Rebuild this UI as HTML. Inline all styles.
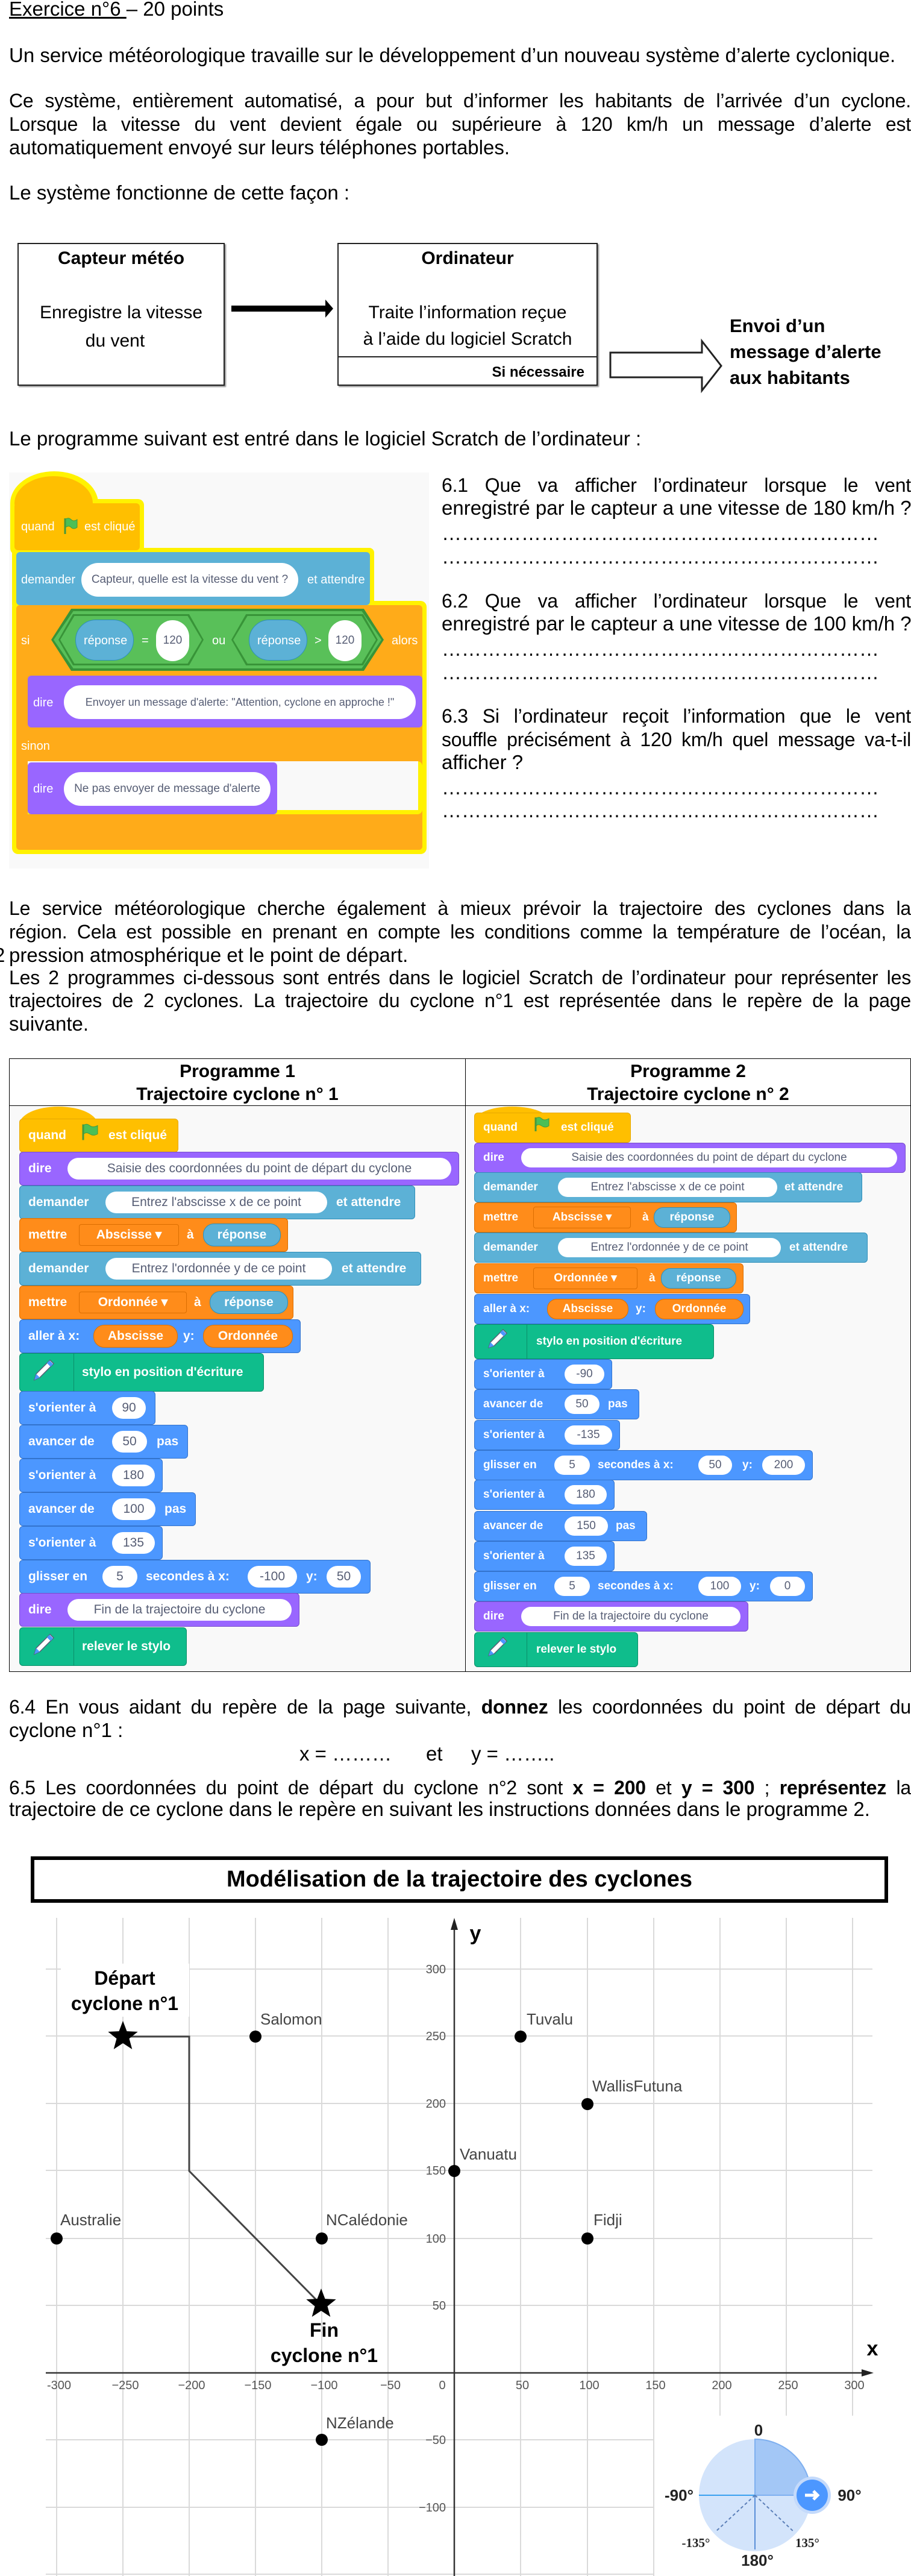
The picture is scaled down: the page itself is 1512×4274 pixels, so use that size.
<!DOCTYPE html>
<html><head><meta charset="utf-8">
<style>
body{margin:0;width:1512px;height:4274px;position:relative;overflow:hidden;background:#fff;font-family:"Liberation Sans",Arial,sans-serif;color:#000}
.a{position:absolute}
.l{position:absolute;left:15px;width:1497px;font-size:33px;line-height:38px;height:38px;white-space:nowrap}
.j{position:absolute;left:15px;width:1497px;font-size:32px;letter-spacing:-0.2px;line-height:38px;height:38px;text-align:justify;text-align-last:justify;white-space:normal;overflow:hidden}
.q{left:733px;width:779px}
.box{position:absolute;border:2.5px solid #222;box-shadow:2px 2px 2px #888;background:#fff}
.ct{position:absolute;left:0;right:0;text-align:center;font-size:30px;line-height:40px}
.b{position:absolute;color:#fff;font-weight:bold;font-size:21px;border-radius:6px;box-sizing:border-box;white-space:nowrap}
.b>span{position:absolute;top:50%;transform:translateY(-50%);line-height:34px}
.b>.in{background:#fff;color:#575e75;font-weight:normal;text-align:center;height:36px;line-height:36px;border-radius:18px}
.b2{font-size:19px}
.b2>.in{height:32px;line-height:32px;border-radius:16px}
.ev{background:#ffbf00;border:1px solid #e6a800}
.lo{background:#9966ff;border:1px solid #774dcb}
.se{background:#5cb1d6;border:1px solid #2e8eb8}
.va{background:#ff8c1a;border:1px solid #db6e00}
.mo{background:#4c97ff;border:1px solid #3373cc}
.pe{background:#0fbd8c;border:1px solid #0b8e69}
.dd{border:1px solid #db6e00;border-radius:4px;text-align:center;color:#fff}
.ovs{background:#5cb1d6;border:1px solid #2e8eb8;border-radius:18px;height:36px;text-align:center;color:#fff}
.ovv{background:#ff8c1a;border:1px solid #db6e00;border-radius:18px;height:36px;text-align:center;color:#fff}
.b2>.ovs,.b2>.ovv{height:32px;border-radius:16px}
.sep{width:1px;height:100%;top:0!important;transform:none!important;background:#0b8e69}
.s1{position:absolute;color:#fff;font-size:20px;white-space:nowrap;transform:translateY(-50%);line-height:30px}
.i1{position:absolute;background:#fff;color:#575e75;font-size:19px;border-radius:28px;text-align:center;white-space:nowrap;box-sizing:border-box}
</style></head><body>

<div class="l" style="top:-4px"><span style="text-decoration:underline">Exercice n°6 </span>– 20 points</div>
<div class="l" style="top:73px">Un service météorologique travaille sur le développement d’un nouveau système d’alerte cyclonique.</div>
<div class="j" style="top:148px">Ce système, entièrement automatisé, a pour but d’informer les habitants de l’arrivée d’un cyclone.</div>
<div class="j" style="top:187px">Lorsque la vitesse du vent devient égale ou supérieure à 120 km/h un message d’alerte est</div>
<div class="l" style="top:226px">automatiquement envoyé sur leurs téléphones portables.</div>
<div class="l" style="top:301px">Le système fonctionne de cette façon :</div>

<div class="box" style="left:29px;top:403px;width:340px;height:233px">
  <div class="ct" style="top:4px;font-weight:bold">Capteur météo</div>
  <div class="ct" style="top:94px">Enregistre la vitesse</div>
  <div class="ct" style="top:141px;left:-20px">du vent</div>
</div>
<div class="box" style="left:560px;top:403px;width:428px;height:233px">
  <div class="ct" style="top:4px;font-weight:bold">Ordinateur</div>
  <div class="ct" style="top:94px">Traite l’information reçue</div>
  <div class="ct" style="top:138px">à l’aide du logiciel Scratch</div>
  <div class="a" style="left:0;right:0;top:186px;border-top:2.5px solid #222"></div>
  <div class="a" style="right:20px;top:196px;font-size:24px;font-weight:bold;line-height:34px">Si nécessaire</div>
</div>
<svg class="a" style="left:0;top:480px" width="1512" height="180">
  <polygon points="384,27 540,27 540,17 553,32 540,47 540,37 384,37" fill="#000"/>
  <polygon points="1013,105 1165,105 1165,86 1197,127 1165,168 1165,146 1013,146" fill="#fff" stroke="#222" stroke-width="3"/>
</svg>
<div class="a" style="left:1211px;top:519px;font-size:31px;font-weight:bold;line-height:43px">Envoi d’un<br>message d’alerte<br>aux habitants</div>

<div class="l" style="top:709px">Le programme suivant est entré dans le logiciel Scratch de l’ordinateur :</div>

<div class="a" style="left:15px;top:784px;width:697px;height:657px;background:#f9f9f9"></div>
<div class="a" style="left:17px;top:782px;width:146px;height:106px;border-radius:50%;background:#fff200"></div>
<div class="a" style="left:17px;top:828px;width:222px;height:92px;border-radius:10px;background:#fff200"></div>
<div class="a" style="left:20px;top:909px;width:601px;height:102px;border-radius:8px;background:#fff200"></div>
<div class="a" style="left:20px;top:997px;width:688px;height:420px;border-radius:10px;background:#fff200"></div>
<div class="a" style="left:24px;top:790px;width:130px;height:90px;border-radius:50%;background:#ffbf00"></div>
<div class="a" style="left:24px;top:835px;width:208px;height:78px;border-radius:6px;background:#ffbf00"></div>
<span class="s1" style="left:35px;top:874px">quand</span>
<svg class="a" style="left:104px;top:858px" width="26" height="30"><path d="M4 2V28" stroke="#45993d" stroke-width="3"/><path d="M5 3Q10 0 14 4T24 4V17Q18 21 14 17T5 17Z" fill="#4cbf56" stroke="#45993d"/></svg>
<span class="s1" style="left:140px;top:874px">est cliqué</span>

<div class="a" style="left:27px;top:916px;width:587px;height:88px;border-radius:6px;background:#5cb1d6"></div>
<span class="s1" style="left:35px;top:962px">demander</span>
<div class="i1" style="left:135px;top:934px;width:360px;height:56px;line-height:56px">Capteur, quelle est la vitesse du vent ?</div>
<span class="s1" style="left:510px;top:962px">et attendre</span>

<div class="a" style="left:27px;top:1004px;width:674px;height:406px;border-radius:6px;background:#ffab19"></div>
<div class="a" style="left:46px;top:1263px;width:655px;height:88px;background:#fff200;border-radius:0 8px 8px 0"></div>
<div class="a" style="left:46px;top:1263px;width:648px;height:81px;background:#f9f9f9"></div>
<div class="a" style="left:27px;top:1207px;width:674px;height:56px;background:#ffab19;border-radius:0 6px 6px 0"></div>
<div class="a" style="left:27px;top:1351px;width:674px;height:59px;background:#ffab19;border-radius:0 6px 6px 6px"></div>
<div class="a" style="left:27px;top:1200px;width:19px;height:160px;background:#ffab19"></div>
<span class="s1" style="left:35px;top:1063px">si</span>
<div class="a" style="left:85px;top:1010px;width:552px;height:103px;background:#389438;clip-path:polygon(0 50%,6% 0,94% 0,100% 50%,94% 100%,6% 100%)"></div>
<div class="a" style="left:89px;top:1014px;width:544px;height:95px;background:#59c059;clip-path:polygon(0 50%,6% 0,94% 0,100% 50%,94% 100%,6% 100%)"></div>
<div class="a" style="left:97px;top:1019px;width:241px;height:85px;background:#389438;clip-path:polygon(0 50%,10% 0,90% 0,100% 50%,90% 100%,10% 100%)"></div>
<div class="a" style="left:100px;top:1022px;width:235px;height:79px;background:#59c059;clip-path:polygon(0 50%,10% 0,90% 0,100% 50%,90% 100%,10% 100%)"></div>
<div class="a" style="left:384px;top:1019px;width:243px;height:85px;background:#389438;clip-path:polygon(0 50%,10% 0,90% 0,100% 50%,90% 100%,10% 100%)"></div>
<div class="a" style="left:387px;top:1022px;width:237px;height:79px;background:#59c059;clip-path:polygon(0 50%,10% 0,90% 0,100% 50%,90% 100%,10% 100%)"></div>
<div class="a" style="left:125px;top:1028px;width:97px;height:68px;border-radius:34px;background:#5cb1d6;border:1px solid #2e8eb8;box-sizing:border-box"></div>
<span class="s1" style="left:139px;top:1063px">réponse</span>
<span class="s1" style="left:235px;top:1063px">=</span>
<div class="i1" style="left:259px;top:1029px;width:55px;height:68px;line-height:68px">120</div>
<span class="s1" style="left:352px;top:1063px">ou</span>
<div class="a" style="left:413px;top:1028px;width:97px;height:68px;border-radius:34px;background:#5cb1d6;border:1px solid #2e8eb8;box-sizing:border-box"></div>
<span class="s1" style="left:427px;top:1063px">réponse</span>
<span class="s1" style="left:522px;top:1063px">&gt;</span>
<div class="i1" style="left:545px;top:1029px;width:55px;height:68px;line-height:68px">120</div>
<span class="s1" style="left:650px;top:1063px">alors</span>

<div class="a" style="left:46px;top:1121px;width:655px;height:86px;border-radius:6px;background:#9966ff"></div>
<span class="s1" style="left:55px;top:1166px">dire</span>
<div class="i1" style="left:106px;top:1137px;width:584px;height:56px;line-height:56px;font-size:18px">Envoyer un message d'alerte: "Attention, cyclone en approche !"</div>
<span class="s1" style="left:35px;top:1238px">sinon</span>
<div class="a" style="left:46px;top:1265px;width:414px;height:86px;border-radius:6px;background:#9966ff"></div>
<span class="s1" style="left:55px;top:1309px">dire</span>
<div class="i1" style="left:106px;top:1281px;width:343px;height:56px;line-height:56px">Ne pas envoyer de message d'alerte</div>

<div class="j q" style="top:786px">6.1 Que va afficher l’ordinateur lorsque le vent</div>
<div class="l q" style="top:824px">enregistré par le capteur a une vitesse de 180 km/h ?</div>
<div class="l q" style="top:866px">…………………………………………………………</div>
<div class="l q" style="top:905px">…………………………………………………………</div>
<div class="j q" style="top:978px">6.2 Que va afficher l’ordinateur lorsque le vent</div>
<div class="l q" style="top:1016px">enregistré par le capteur a une vitesse de 100 km/h ?</div>
<div class="l q" style="top:1058px">…………………………………………………………</div>
<div class="l q" style="top:1097px">…………………………………………………………</div>
<div class="j q" style="top:1169px">6.3 Si l’ordinateur reçoit l’information que le vent</div>
<div class="j q" style="top:1208px">souffle précisément à 120 km/h quel message va-t-il</div>
<div class="l q" style="top:1246px">afficher ?</div>
<div class="l q" style="top:1288px">…………………………………………………………</div>
<div class="l q" style="top:1326px">…………………………………………………………</div>

<div class="j" style="top:1488px">Le service météorologique cherche également à mieux prévoir la trajectoire des cyclones dans la</div>
<div class="j" style="top:1527px">région. Cela est possible en prenant en compte les conditions comme la température de l’océan, la</div>
<div class="l" style="top:1566px"><span style="position:absolute;left:-25px">2</span>pression atmosphérique et le point de départ.</div>
<div class="j" style="top:1603px">Les 2 programmes ci-dessous sont entrés dans le logiciel Scratch de l’ordinateur pour représenter les</div>
<div class="j" style="top:1641px">trajectoires de 2 cyclones. La trajectoire du cyclone n°1 est représentée dans le repère de la page</div>
<div class="l" style="top:1680px">suivante.</div>

<div class="a" style="left:15px;top:1756px;width:1495px;height:1016px;border:1.5px solid #000"></div>
<div class="a" style="left:16px;top:1834px;width:1495px;border-top:1.5px solid #000"></div>
<div class="a" style="left:772px;top:1756px;height:1017px;border-left:1.5px solid #000"></div>
<div class="a" style="left:17px;top:1836px;width:754px;height:936px;background:#f9f9f9"></div>
<div class="a" style="left:774px;top:1836px;width:736px;height:936px;background:#f9f9f9"></div>
<div class="a" style="left:16px;width:756px;top:1759px;text-align:center;font-weight:bold;font-size:30px;line-height:38px">Programme 1<br>Trajectoire cyclone n° 1</div>
<div class="a" style="left:773px;width:738px;top:1759px;text-align:center;font-weight:bold;font-size:30px;line-height:38px">Programme 2<br>Trajectoire cyclone n° 2</div>

<div class="a" style="left:32px;top:1836px;width:130px;height:60px;border-radius:50%;background:#ffbf00"></div>
<div class="b ev" style="left:32px;top:1856px;width:264px;height:56px"><span style="left:14px">quand</span><span style="left:101px"><svg width="30" height="30"><path d="M4 2V28" stroke="#45993d" stroke-width="3"/><path d="M5 3Q10 0 15 4T28 4V18Q21 22 15 18T5 18Z" fill="#4cbf56" stroke="#45993d"/></svg></span><span style="left:147px">est cliqué</span></div>
<div class="b lo" style="left:32px;top:1911px;width:730px;height:56px"><span style="left:14px">dire</span><span class="in" style="left:79px;width:637px">Saisie des coordonnées du point de départ du cyclone</span></div>
<div class="b se" style="left:32px;top:1967px;width:657px;height:56px"><span style="left:14px">demander</span><span class="in" style="left:142px;width:368px">Entrez l'abscisse x de ce point</span><span style="left:525px">et attendre</span></div>
<div class="b va" style="left:32px;top:2021px;width:446px;height:56px"><span style="left:14px">mettre</span><span class="dd" style="left:98px;width:164px">Abscisse ▾</span><span style="left:277px">à</span><span class="ovs" style="left:304px;width:127px;line-height:36px">réponse</span></div>
<div class="b se" style="left:32px;top:2077px;width:667px;height:56px"><span style="left:14px">demander</span><span class="in" style="left:142px;width:376px">Entrez l'ordonnée y de ce point</span><span style="left:534px">et attendre</span></div>
<div class="b va" style="left:32px;top:2133px;width:455px;height:56px"><span style="left:14px">mettre</span><span class="dd" style="left:98px;width:177px">Ordonnée ▾</span><span style="left:289px">à</span><span class="ovs" style="left:315px;width:128px;line-height:36px">réponse</span></div>
<div class="b mo" style="left:32px;top:2189px;width:467px;height:56px"><span style="left:14px">aller à x:</span><span class="ovv" style="left:122px;width:138px;line-height:36px">Abscisse</span><span style="left:271px">y:</span><span class="ovv" style="left:304px;width:147px;line-height:36px">Ordonnée</span></div>
<div class="b pe" style="left:32px;top:2245px;width:406px;height:64px"><span style="left:18px"><svg width="44" height="44"><path d="M6 40L9 30L32 7L38 13L15 36Z" fill="#fff" stroke="#575e75" stroke-width="1.5"/><path d="M29 10L35 16" stroke="#4c97ff" stroke-width="6"/><path d="M6 40L9 30L15 36Z" fill="#4c97ff"/></svg></span><span class="sep" style="left:89px"></span><span style="left:103px">stylo en position d'écriture</span></div>
<div class="b mo" style="left:32px;top:2308px;width:226px;height:56px"><span style="left:14px">s'orienter à</span><span class="in" style="left:153px;width:56px">90</span></div>
<div class="b mo" style="left:32px;top:2364px;width:280px;height:56px"><span style="left:14px">avancer de</span><span class="in" style="left:153px;width:58px">50</span><span style="left:227px">pas</span></div>
<div class="b mo" style="left:32px;top:2420px;width:238px;height:56px"><span style="left:14px">s'orienter à</span><span class="in" style="left:153px;width:71px">180</span></div>
<div class="b mo" style="left:32px;top:2476px;width:293px;height:56px"><span style="left:14px">avancer de</span><span class="in" style="left:153px;width:72px">100</span><span style="left:240px">pas</span></div>
<div class="b mo" style="left:32px;top:2532px;width:238px;height:56px"><span style="left:14px">s'orienter à</span><span class="in" style="left:153px;width:71px">135</span></div>
<div class="b mo" style="left:32px;top:2588px;width:583px;height:56px"><span style="left:14px">glisser en</span><span class="in" style="left:137px;width:58px">5</span><span style="left:209px">secondes à x:</span><span class="in" style="left:378px;width:82px">-100</span><span style="left:475px">y:</span><span class="in" style="left:509px;width:57px">50</span></div>
<div class="b lo" style="left:32px;top:2643px;width:465px;height:56px"><span style="left:14px">dire</span><span class="in" style="left:79px;width:372px">Fin de la trajectoire du cyclone</span></div>
<div class="b pe" style="left:32px;top:2700px;width:278px;height:64px"><span style="left:18px"><svg width="44" height="44"><path d="M6 40L9 30L32 7L38 13L15 36Z" fill="#fff" stroke="#575e75" stroke-width="1.5"/><path d="M29 10L35 16" stroke="#4c97ff" stroke-width="6"/><path d="M6 40L9 30L15 36Z" fill="#4c97ff"/></svg></span><span class="sep" style="left:89px"></span><span style="left:103px">relever le stylo</span></div>

<div class="a" style="left:787px;top:1836px;width:126px;height:50px;border-radius:50%;background:#ffbf00"></div>
<div class="b b2 ev" style="left:787px;top:1846px;width:260px;height:50px"><span style="left:14px">quand</span><span style="left:97px"><svg width="28" height="26"><path d="M4 2V25" stroke="#45993d" stroke-width="3"/><path d="M5 3Q10 0 14 4T26 4V16Q20 20 14 16T5 16Z" fill="#4cbf56" stroke="#45993d"/></svg></span><span style="left:143px">est cliqué</span></div>
<div class="b b2 lo" style="left:787px;top:1896px;width:716px;height:50px"><span style="left:14px">dire</span><span class="in" style="left:77px;width:624px">Saisie des coordonnées du point de départ du cyclone</span></div>
<div class="b b2 se" style="left:787px;top:1945px;width:644px;height:50px"><span style="left:14px">demander</span><span class="in" style="left:138px;width:364px">Entrez l'abscisse x de ce point</span><span style="left:514px">et attendre</span></div>
<div class="b b2 va" style="left:787px;top:1995px;width:436px;height:50px"><span style="left:14px">mettre</span><span class="dd" style="left:97px;width:160px">Abscisse ▾</span><span style="left:278px">à</span><span class="ovs" style="left:297px;width:125px;line-height:32px">réponse</span></div>
<div class="b b2 se" style="left:787px;top:2045px;width:653px;height:50px"><span style="left:14px">demander</span><span class="in" style="left:138px;width:370px">Entrez l'ordonnée y de ce point</span><span style="left:522px">et attendre</span></div>
<div class="b b2 va" style="left:787px;top:2096px;width:447px;height:50px"><span style="left:14px">mettre</span><span class="dd" style="left:97px;width:171px">Ordonnée ▾</span><span style="left:289px">à</span><span class="ovs" style="left:309px;width:123px;line-height:32px">réponse</span></div>
<div class="b b2 mo" style="left:787px;top:2147px;width:458px;height:50px"><span style="left:14px">aller à x:</span><span class="ovv" style="left:120px;width:133px;line-height:32px">Abscisse</span><span style="left:267px">y:</span><span class="ovv" style="left:299px;width:145px;line-height:32px">Ordonnée</span></div>
<div class="b b2 pe" style="left:787px;top:2197px;width:398px;height:58px"><span style="left:18px"><svg width="40" height="40"><path d="M5 36L8 27L29 6L35 12L14 33Z" fill="#fff" stroke="#575e75" stroke-width="1.5"/><path d="M26 9L32 15" stroke="#4c97ff" stroke-width="6"/><path d="M5 36L8 27L14 33Z" fill="#4c97ff"/></svg></span><span class="sep" style="left:86px"></span><span style="left:102px">stylo en position d'écriture</span></div>
<div class="b b2 mo" style="left:787px;top:2255px;width:229px;height:50px"><span style="left:14px">s'orienter à</span><span class="in" style="left:149px;width:66px">-90</span></div>
<div class="b b2 mo" style="left:787px;top:2305px;width:274px;height:50px"><span style="left:14px">avancer de</span><span class="in" style="left:149px;width:58px">50</span><span style="left:221px">pas</span></div>
<div class="b b2 mo" style="left:787px;top:2356px;width:242px;height:50px"><span style="left:14px">s'orienter à</span><span class="in" style="left:149px;width:79px">-135</span></div>
<div class="b b2 mo" style="left:787px;top:2406px;width:562px;height:50px"><span style="left:14px">glisser en</span><span class="in" style="left:132px;width:59px">5</span><span style="left:204px">secondes à x:</span><span class="in" style="left:371px;width:56px">50</span><span style="left:444px">y:</span><span class="in" style="left:477px;width:71px">200</span></div>
<div class="b b2 mo" style="left:787px;top:2455px;width:233px;height:50px"><span style="left:14px">s'orienter à</span><span class="in" style="left:149px;width:70px">180</span></div>
<div class="b b2 mo" style="left:787px;top:2507px;width:287px;height:50px"><span style="left:14px">avancer de</span><span class="in" style="left:149px;width:72px">150</span><span style="left:234px">pas</span></div>
<div class="b b2 mo" style="left:787px;top:2557px;width:233px;height:50px"><span style="left:14px">s'orienter à</span><span class="in" style="left:149px;width:70px">135</span></div>
<div class="b b2 mo" style="left:787px;top:2607px;width:562px;height:50px"><span style="left:14px">glisser en</span><span class="in" style="left:132px;width:59px">5</span><span style="left:204px">secondes à x:</span><span class="in" style="left:371px;width:71px">100</span><span style="left:456px">y:</span><span class="in" style="left:490px;width:58px">0</span></div>
<div class="b b2 lo" style="left:787px;top:2657px;width:455px;height:50px"><span style="left:14px">dire</span><span class="in" style="left:77px;width:364px">Fin de la trajectoire du cyclone</span></div>
<div class="b b2 pe" style="left:787px;top:2708px;width:272px;height:58px"><span style="left:18px"><svg width="40" height="40"><path d="M5 36L8 27L29 6L35 12L14 33Z" fill="#fff" stroke="#575e75" stroke-width="1.5"/><path d="M26 9L32 15" stroke="#4c97ff" stroke-width="6"/><path d="M5 36L8 27L14 33Z" fill="#4c97ff"/></svg></span><span class="sep" style="left:86px"></span><span style="left:102px">relever le stylo</span></div>

<div class="j" style="top:2813px">6.4 En vous aidant du repère de la page suivante, <b>donnez</b> les coordonnées du point de départ du</div>
<div class="l" style="top:2852px">cyclone n°1 :</div>
<div class="l" style="top:2891px;left:497px;width:400px">x = ………<span style="position:absolute;left:210px">et</span><span style="position:absolute;left:285px">y = ……..</span></div>
<div class="j" style="top:2947px">6.5 Les coordonnées du point de départ du cyclone n°2 sont <b>x = 200</b> et <b>y = 300</b> ; <b>représentez</b> la</div>
<div class="l" style="top:2983px">trajectoire de ce cyclone dans le repère en suivant les instructions données dans le programme 2.</div>

<div class="a" style="left:51px;top:3080px;width:1411px;height:65px;border:6px solid #000;text-align:center;font-weight:bold;font-size:38px;line-height:65px">Modélisation de la trajectoire des cyclones</div>

<svg class="a" style="left:0;top:3160px" width="1512" height="1114">
<g transform="translate(0,-3160)" font-family="Liberation Sans, Arial, sans-serif">
<g stroke="#dadada" stroke-width="2">
<line x1="94" y1="3182" x2="94" y2="4274"/><line x1="204" y1="3182" x2="204" y2="4274"/><line x1="314" y1="3182" x2="314" y2="4274"/><line x1="424" y1="3182" x2="424" y2="4274"/><line x1="534" y1="3182" x2="534" y2="4274"/><line x1="644" y1="3182" x2="644" y2="4274"/><line x1="864" y1="3182" x2="864" y2="4274"/><line x1="975" y1="3182" x2="975" y2="4274"/><line x1="1085" y1="3182" x2="1085" y2="4274"/><line x1="1195" y1="3182" x2="1195" y2="4274"/><line x1="1305" y1="3182" x2="1305" y2="4274"/><line x1="1415" y1="3182" x2="1415" y2="4274"/>
<line x1="76" y1="3267" x2="1448" y2="3267"/><line x1="76" y1="3378" x2="1448" y2="3378"/><line x1="76" y1="3490" x2="1448" y2="3490"/><line x1="76" y1="3601" x2="1448" y2="3601"/><line x1="76" y1="3714" x2="1448" y2="3714"/><line x1="76" y1="3825" x2="1448" y2="3825"/><line x1="76" y1="4048" x2="1448" y2="4048"/><line x1="76" y1="4160" x2="1448" y2="4160"/><line x1="76" y1="4271" x2="1448" y2="4271"/>
</g>
<line x1="76" y1="3937" x2="1440" y2="3937" stroke="#333" stroke-width="2.5"/>
<polygon points="1450,3937 1430,3931 1430,3943" fill="#222"/>
<line x1="754" y1="3192" x2="754" y2="4274" stroke="#333" stroke-width="2.5"/>
<polygon points="754,3182 748,3202 760,3202" fill="#222"/>
<text x="789" y="3219" font-size="34" font-weight="bold" text-anchor="middle">y</text>
<text x="1448" y="3908" font-size="34" font-weight="bold" text-anchor="middle">x</text>
<g font-size="20" fill="#555" text-anchor="middle">
<text x="98" y="3964">-300</text><text x="208" y="3964">−250</text><text x="318" y="3964">−200</text><text x="428" y="3964">−150</text><text x="538" y="3964">−100</text><text x="648" y="3964">−50</text><text x="734" y="3964">0</text><text x="867" y="3964">50</text><text x="978" y="3964">100</text><text x="1088" y="3964">150</text><text x="1198" y="3964">200</text><text x="1308" y="3964">250</text><text x="1418" y="3964">300</text>
</g>
<g font-size="20" fill="#555" text-anchor="end">
<text x="740" y="3274">300</text><text x="740" y="3385">250</text><text x="740" y="3497">200</text><text x="740" y="3608">150</text><text x="740" y="3721">100</text><text x="740" y="3832">50</text><text x="740" y="4055">−50</text><text x="740" y="4167">−100</text>
</g>
<polyline points="204,3379 314,3379 314,3602 534,3825" fill="none" stroke="#444" stroke-width="3"/>
<g fill="#000">
<circle cx="424" cy="3379" r="10"/><circle cx="864" cy="3379" r="10"/><circle cx="975" cy="3491" r="10"/><circle cx="754" cy="3602" r="10"/><circle cx="94" cy="3714" r="10"/><circle cx="534" cy="3714" r="10"/><circle cx="975" cy="3714" r="10"/><circle cx="534" cy="4048" r="10"/>
<path transform="translate(204,3379)" d="M0,-26 6.5,-8.9 24.7,-8 10.5,3.4 15.3,21 0,11 -15.3,21 -10.5,3.4 -24.7,-8 -6.5,-8.9Z"/>
<path transform="translate(533,3823)" d="M0,-26 6.5,-8.9 24.7,-8 10.5,3.4 15.3,21 0,11 -15.3,21 -10.5,3.4 -24.7,-8 -6.5,-8.9Z"/>
</g>
<g font-size="26" fill="#444">
<text x="432" y="3359">Salomon</text><text x="874" y="3359">Tuvalu</text><text x="983" y="3470">WallisFutuna</text><text x="763" y="3583">Vanuatu</text><text x="100" y="3692">Australie</text><text x="541" y="3692">NCalédonie</text><text x="985" y="3692">Fidji</text><text x="541" y="4029">NZélande</text>
</g>
<rect x="101" y="3258" width="213" height="88" fill="#fff"/>
<g font-size="32" font-weight="bold" text-anchor="middle">
<text x="207" y="3293">Départ</text><text x="207" y="3335">cyclone n°1</text>
<text x="538" y="3877">Fin</text><text x="538" y="3919">cyclone n°1</text>
</g>
<rect x="1086" y="4008" width="370" height="270" fill="#fff"/>
<circle cx="1253" cy="4140" r="93" fill="#d3e4fb"/>
<path d="M1253 4140 L1253 4047 A93 93 0 0 1 1346 4140 Z" fill="#a3c7f6" stroke="#7fb0f0" stroke-width="2"/>
<line x1="1160" y1="4140" x2="1253" y2="4140" stroke="#3aa0f0" stroke-width="2"/>
<line x1="1253" y1="4140" x2="1253" y2="4230" stroke="#5b8fd8" stroke-width="2"/>
<line x1="1253" y1="4140" x2="1187" y2="4201" stroke="#5b7fb8" stroke-width="2" stroke-dasharray="5,4"/>
<line x1="1253" y1="4140" x2="1318" y2="4201" stroke="#5b7fb8" stroke-width="2" stroke-dasharray="5,4"/>
<circle cx="1348" cy="4140" r="31" fill="#c4dafb"/>
<circle cx="1348" cy="4140" r="26" fill="#4c97ff"/>
<path d="M1336 4140 H1357 M1350 4133 L1357 4140 L1350 4147" stroke="#fff" stroke-width="5" fill="none"/>
<g font-weight="bold" text-anchor="middle" fill="#222">
<text x="1259" y="4041" font-size="26">0</text>
<text x="1127" y="4149" font-size="26">-90°</text>
<text x="1410" y="4149" font-size="26">90°</text>
<text x="1257" y="4257" font-size="26">180°</text>
<text x="1155" y="4226" font-size="21" font-family="Liberation Serif, serif">-135°</text>
<text x="1340" y="4226" font-size="21" font-family="Liberation Serif, serif">135°</text>
</g>
</g>
</svg>
</body></html>
